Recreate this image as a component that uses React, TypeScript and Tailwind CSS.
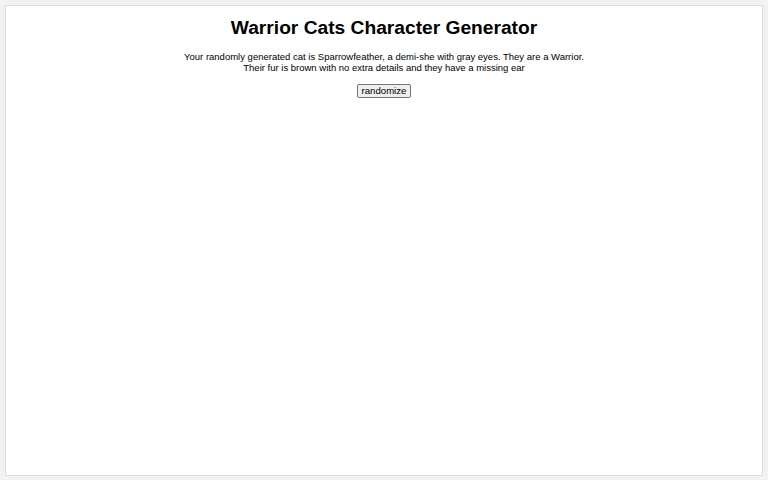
export default function App() {
  return (
    <div className="h-[480px] w-[768px] bg-[#f2f2f2] p-[5px] pb-[4px] font-['Liberation_Sans',Arial,sans-serif]">
      <div className="flex h-full flex-col items-center border border-[#dcdcdc] bg-white text-black">
        <h1 className="mt-[10px] text-[19.2px] font-bold leading-[24px]">Warrior Cats Character Generator</h1>
        <p className="mt-[11px] text-center text-[9.5px] leading-[11px]">
          Your randomly generated cat is Sparrowfeather, a demi-she with gray eyes. They are a Warrior.
          <br />
          Their fur is brown with no extra details and they have a missing ear
        </p>
        <button className="mt-[11px] rounded-[2px] border border-[#767676] bg-[#efefef] px-[4px] text-[9.6px] leading-[12px]">
          randomize
        </button>
      </div>
    </div>
  )
}
